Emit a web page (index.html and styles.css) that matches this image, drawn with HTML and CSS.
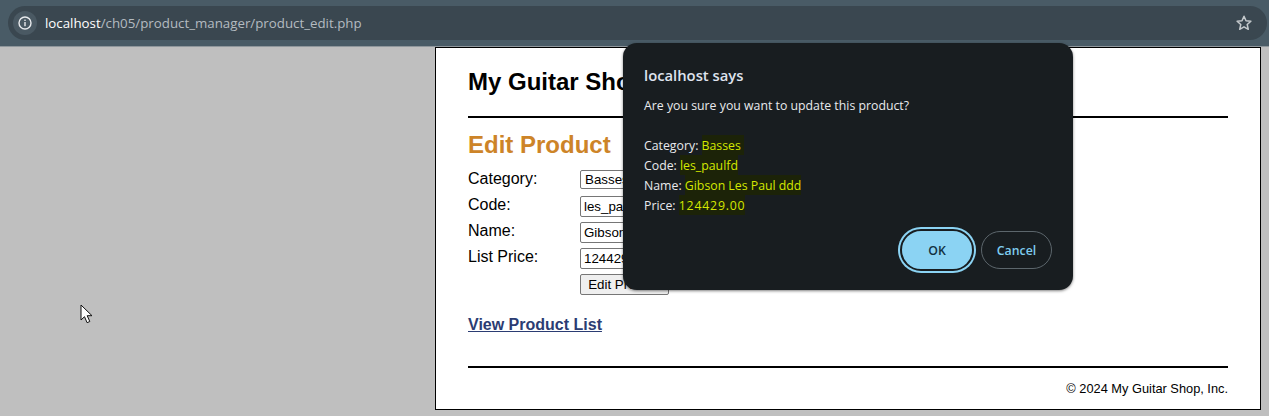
FILE: index.html
```html
<!DOCTYPE html>
<html lang="en">
<head>
    <meta charset="UTF-8">
    <title>My Guitar Shop</title>
    <link rel="stylesheet" href="styles.css">
</head>
<body>
    <div class="toolbar">
        <div class="omnibox">
            <span class="site-info">
                <svg width="16" height="16" viewBox="0 0 16 16">
                    <circle cx="8" cy="8" r="6" fill="none" stroke="#e8eaed" stroke-width="1.4"/>
                    <rect x="7.3" y="7" width="1.4" height="4.2" fill="#e8eaed"/>
                    <rect x="7.3" y="4.6" width="1.4" height="1.4" fill="#e8eaed"/>
                </svg>
            </span>
            <span class="url"><span class="host">localhost</span>/ch05/product_manager/product_edit.php</span>
            <svg class="star" width="18" height="18" viewBox="0 0 18 18">
                <path d="M9 2.2l2 4.5 4.9.5-3.7 3.3 1.1 4.8L9 12.8l-4.300 2.500 1.100-4.800L2.100 7.200 7 6.700z" fill="none" stroke="#c4c9cc" stroke-width="1.500" stroke-linejoin="round"/>
            </svg>
        </div>
    </div>

    <main class="viewport">
        <div class="page">
            <header class="page-header">
                <h1>My Guitar Shop</h1>
            </header>
            <h2>Edit Product</h2>
            <form class="product-form">
                <label>Category:</label>
                <select class="category-select">
                    <option>Basses</option>
                </select>
                <label>Code:</label>
                <input type="text" value="les_paulfd">
                <label>Name:</label>
                <input type="text" value="Gibson Les Paul ddd">
                <label>List Price:</label>
                <input type="text" value="124429.00">
                <span></span>
                <button type="button" class="edit-button">Edit Product</button>
            </form>
            <p class="list-link"><a href="#">View Product List</a></p>
            <footer class="page-footer">© 2024 My Guitar Shop, Inc.</footer>
        </div>
    </main>

    <div class="dialog">
        <div class="dialog-title">localhost says</div>
        <p class="dialog-question">Are you sure you want to update this product?</p>
        <div class="dialog-line">Category: <mark>Basses&nbsp;</mark></div>
        <div class="dialog-line">Code: <mark>les_paulfd</mark></div>
        <div class="dialog-line">Name: <mark>Gibson Les Paul ddd</mark></div>
        <div class="dialog-line">Price: <mark class="price">124429.00</mark></div>
        <div class="dialog-buttons">
            <button type="button" class="ok-button">OK</button>
            <button type="button" class="cancel-button">Cancel</button>
        </div>
    </div>

    <svg class="cursor" width="14" height="21" viewBox="0 0 14 21">
        <path d="M1 1v15l3.500-3.300 2.600 6 2.700-1.200-2.600-5.800h4.800z" fill="#fff" stroke="#111" stroke-width="1"/>
    </svg>
</body>
</html>
```

FILE: styles.css
```css
body {
    margin: 0;
    height: 416px;
    overflow: hidden;
    background-color: #bfbfbf;
    font-family: "Liberation Sans", Arial, sans-serif;
    color: #000;
}

/* browser chrome */
.toolbar {
    height: 47px;
    box-sizing: border-box;
    padding: 6px 2px 6px 8px;
    background-color: #495b66;
    border-bottom: 1px solid #8f979c;
}
.omnibox {
    height: 34px;
    display: flex;
    align-items: center;
    padding: 0 14px 0 5px;
    background-color: #3a4750;
    border-radius: 17px;
}
.site-info {
    width: 24px;
    height: 24px;
    display: flex;
    align-items: center;
    justify-content: center;
    border-radius: 50%;
    background-color: #4a5963;
}
.url {
    margin-left: 8px;
    font-family: "Open Sans", sans-serif;
    font-size: 13.3px;
    color: #b4bbc0;
}
.host {
    color: #fff;
}
.star {
    margin-left: auto;
}

/* page */
.viewport {
    display: flex;
    justify-content: flex-end;
    padding-right: 8px;
}
.page {
    width: 826px;
    height: 363px;
    box-sizing: border-box;
    padding: 0 32px;
    background-color: #fff;
    border: 1px solid #000;
}
.page-header {
    height: 68px;
    border-bottom: 2px solid #000;
}
h1 {
    margin: 0;
    padding-top: 20px;
    font-size: 24px;
    line-height: 28px;
}
h2 {
    margin: 13px 0 0;
    font-size: 24px;
    line-height: 28px;
    color: #cd8428;
}
.product-form {
    display: grid;
    grid-template-columns: 112px 160px;
    grid-auto-rows: 21px;
    row-gap: 5px;
    margin-top: 11px;
    font-size: 16px;
}
.product-form label {
    line-height: 18px;
}
.product-form input {
    box-sizing: border-box;
    height: 21px;
    padding: 0 3px;
    border: 1px solid #767676;
    border-radius: 2px;
    font-family: "Liberation Sans", Arial, sans-serif;
    font-size: 13.33px;
}
.category-select {
    box-sizing: border-box;
    height: 19px;
    padding: 0;
    background-color: #fff;
    border: 1px solid #767676;
    border-radius: 2px;
    font-family: "Liberation Sans", Arial, sans-serif;
    font-size: 13.33px;
}
.edit-button {
    width: 89px;
    height: 21px;
    padding: 0;
    background-color: #efefef;
    border: 1px solid #767676;
    border-radius: 2px;
    font-family: "Liberation Sans", Arial, sans-serif;
    font-size: 13.33px;
}
.list-link {
    margin: 21px 0 0;
    font-size: 16px;
    line-height: 18px;
    font-weight: bold;
}
.list-link a {
    color: #2b3c73;
}
.page-footer {
    margin-top: 32px;
    padding-top: 13px;
    border-top: 2px solid #000;
    text-align: right;
    font-size: 12.8px;
    line-height: 16px;
}

/* alert on top of the page */
.dialog {
    position: absolute;
    left: 623px;
    top: 43px;
    width: 450px;
    height: 247px;
    box-sizing: border-box;
    padding: 22px 21px 0;
    background-color: #181d20;
    border-radius: 14px;
    box-shadow: 0 1px 3px rgba(0, 0, 0, 0.5);
    font-family: "Open Sans", sans-serif;
    font-size: 12.3px;
    line-height: 20px;
    color: #e8eaed;
}
.dialog-title {
    font-size: 14.8px;
    font-weight: 600;
    color: #dfe3ee;
}
.dialog-question {
    margin: 11px 0 20px;
}
.dialog mark {
    padding: 2px 0 1px;
    background-color: #1c2308;
    color: #d4e800;
}
.dialog .price {
    letter-spacing: 0.8px;
}
.dialog-buttons {
    display: flex;
    justify-content: flex-end;
    align-items: center;
    margin-top: 13px;
}
.ok-button {
    width: 74px;
    height: 42px;
    margin-right: 7px;
    background-color: #8bd3f3;
    border: 2px solid #181d20;
    border-radius: 21px;
    box-shadow: 0 0 0 2px #8bd3f3;
    font-family: "Open Sans", sans-serif;
    font-size: 12.3px;
    font-weight: 600;
    color: #12303f;
}
.cancel-button {
    width: 71px;
    height: 38px;
    background: none;
    border: 1px solid #5c666c;
    border-radius: 19px;
    font-family: "Open Sans", sans-serif;
    font-size: 12.3px;
    font-weight: 600;
    color: #7fcdf0;
}

.cursor {
    position: absolute;
    left: 80px;
    top: 304px;
}
```
